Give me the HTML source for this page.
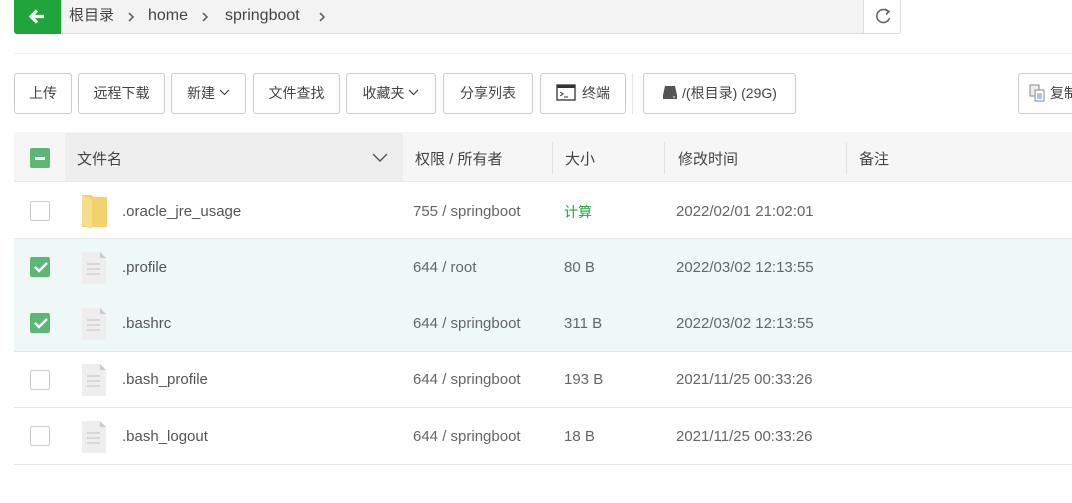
<!DOCTYPE html>
<html><head><meta charset="utf-8"><style>
*{box-sizing:border-box;margin:0;padding:0}
body{width:1072px;height:503px;background:#fff;font-family:"Liberation Sans","Noto Sans CJK SC",sans-serif;color:#555;font-size:14px;position:relative;overflow:hidden}
.abs{position:absolute}
.crumb{left:14px;top:0;width:887px;height:34px;background:#f3f3f3;border:1px solid #ddd;border-top:none;border-radius:0 0 3px 3px}
.back{left:14px;top:0;width:47px;height:34px;background:#20a53a;border-radius:0 0 0 3px}
.ref{left:863px;top:0;width:38px;height:34px;background:#fff;border:1px solid #ddd;border-top:none;border-radius:0 0 3px 0}
.ct{top:6px;font-size:16px;color:#444;line-height:20px}
.sep{left:14px;top:53px;width:1058px;height:1px;background:#eee}
.btn{position:absolute;top:73px;height:41px;border:1px solid #ccc;border-radius:3px;background:#fff;font-size:14px;color:#444;line-height:39px;text-align:center}
.hd{left:14px;top:132px;width:1058px;height:50px;background:#f6f6f6;border-bottom:1px solid #e8e8e8}
.hdn{left:65px;top:133px;width:338px;height:48px;background:#eee}
.ht{top:150px;font-size:15px;color:#444;line-height:20px}
.vl{top:142px;width:1px;height:32px;background:#e2e2e2}
.row{left:14px;width:1058px;height:57px;border-bottom:1px solid #e6e6e6}
.sel{background:#eff8f6;border-bottom:1px solid #d8ece8}
.cb{left:30px;width:20px;height:20px;border:1px solid #ccc;border-radius:2px;background:#fff}
.cbc{background:#5bb874;border-color:#5bb874}
.t{font-size:15px;color:#555;line-height:20px}
</style></head><body>
<div class="abs crumb"></div>
<div class="abs back"><svg width="47" height="34"><path d="M17 16.5h13M23 10.5l-6 6 6 6" stroke="#fff" stroke-width="3.2" fill="none"/></svg></div>
<div class="abs ct" style="left:69px;font-size:15px">根目录</div>
<svg class="abs" style="left:127px;top:11px" width="8" height="12"><path d="M2 2l4 4-4 4" stroke="#666" stroke-width="1.6" fill="none"/></svg>
<div class="abs ct" style="left:148px">home</div>
<svg class="abs" style="left:201px;top:11px" width="8" height="12"><path d="M2 2l4 4-4 4" stroke="#666" stroke-width="1.6" fill="none"/></svg>
<div class="abs ct" style="left:225px">springboot</div>
<svg class="abs" style="left:318px;top:11px" width="8" height="12"><path d="M2 2l4 4-4 4" stroke="#666" stroke-width="1.6" fill="none"/></svg>
<div class="abs ref"><svg width="38" height="34"><path d="M24 11.5A6.5 6.5 0 1 0 25.5 18" stroke="#666" stroke-width="1.6" fill="none"/><path d="M21 9l4 2.5-3 3" stroke="#666" stroke-width="1.6" fill="none"/></svg></div>
<div class="abs sep"></div>
<div class="btn" style="left:14px;width:58px">上传</div>
<div class="btn" style="left:78px;width:87px">远程下载</div>
<div class="btn" style="left:171px;width:75px">新建 <svg width="11" height="7" style="vertical-align:2px"><path d="M1 1l4.5 4.5L10 1" stroke="#444" stroke-width="1.2" fill="none"/></svg></div>
<div class="btn" style="left:253px;width:87px">文件查找</div>
<div class="btn" style="left:346px;width:90px">收藏夹 <svg width="11" height="7" style="vertical-align:2px"><path d="M1 1l4.5 4.5L10 1" stroke="#444" stroke-width="1.2" fill="none"/></svg></div>
<div class="btn" style="left:443px;width:90px">分享列表</div>
<div class="btn" style="left:540px;width:86px"><svg width="20" height="17" style="vertical-align:-3px;margin-right:6px"><rect x="1" y="1" width="18" height="15" fill="#fff" stroke="#333" stroke-width="1.3"/><rect x="1" y="1" width="18" height="3" fill="#333"/><path d="M4 8l3 2-3 2M8 13h4" stroke="#333" stroke-width="1" fill="none"/></svg>终端</div>
<div class="abs" style="left:632px;top:73px;width:1px;height:41px;background:#e5e5e5"></div>
<div class="btn" style="left:643px;width:153px"><svg width="16" height="16" style="vertical-align:-2px;margin-right:4px"><path d="M3 2h10l2 9H1z" fill="#555"/><rect x="1" y="11" width="14" height="4" fill="#555"/><rect x="11" y="12.5" width="2" height="1" fill="#fff"/></svg>/(根目录) (29G)</div>
<div class="btn" style="left:1018px;width:70px;text-align:left;padding-left:10px"><svg width="17" height="18" style="vertical-align:-4px;margin-right:4px"><rect x="1" y="1" width="9" height="11" fill="#eee" stroke="#888"/><rect x="6" y="6" width="9" height="11" fill="#fff" stroke="#888"/><path d="M8 10h5M8 12h5M8 14h5" stroke="#5a8fd6"/></svg>复制</div>
<div class="abs hd"></div>
<div class="abs hdn"></div>
<div class="abs cb cbc" style="top:148px"><div style="position:absolute;left:4px;top:8px;width:10px;height:2.5px;background:#fff"></div></div>
<div class="abs ht" style="left:77px">文件名</div>
<svg class="abs" style="left:372px;top:152px" width="16" height="12"><path d="M1 2l7 7 7-7" stroke="#555" stroke-width="1.4" fill="none"/></svg>
<div class="abs ht" style="left:415px">权限 / 所有者</div>
<div class="abs vl" style="left:552px"></div>
<div class="abs ht" style="left:565px">大小</div>
<div class="abs vl" style="left:664px"></div>
<div class="abs ht" style="left:678px">修改时间</div>
<div class="abs vl" style="left:846px"></div>
<div class="abs ht" style="left:859px">备注</div>

<div class="abs row" style="top:182px"></div>
<div class="abs row sel" style="top:239px"></div>
<div class="abs row sel" style="top:295px"></div>
<div class="abs row" style="top:351px"></div>
<div class="abs row" style="top:408px"></div>

<div class="abs cb" style="top:201px"></div>
<div class="abs cb cbc" style="top:257px"></div>
<div class="abs cb cbc" style="top:313px"></div>
<div class="abs cb" style="top:370px"></div>
<div class="abs cb" style="top:426px"></div>
<svg class="abs" style="left:33px;top:260px" width="16" height="14"><path d="M2 7l4 4 8-8" stroke="#fff" stroke-width="2.4" fill="none"/></svg>
<svg class="abs" style="left:33px;top:316px" width="16" height="14"><path d="M2 7l4 4 8-8" stroke="#fff" stroke-width="2.4" fill="none"/></svg>

<svg class="abs" style="left:81px;top:192px" width="27" height="38"><path d="M1 3h9l3 2h13v30H1z" fill="#f3d16e"/><path d="M1 3l10 4v30l-10-4z" fill="#f7dd8a"/></svg>
<svg class="abs" style="left:82px;top:252px" width="24" height="32"><path d="M0 0h18l6 6v26H0z" fill="#eee"/><path d="M18 0v6h6z" fill="#ccc"/><path d="M5 12h13M5 17h13M5 22h13" stroke="#ccc" stroke-width="1.3"/></svg>
<svg class="abs" style="left:82px;top:308px" width="24" height="32"><path d="M0 0h18l6 6v26H0z" fill="#eee"/><path d="M18 0v6h6z" fill="#ccc"/><path d="M5 12h13M5 17h13M5 22h13" stroke="#ccc" stroke-width="1.3"/></svg>
<svg class="abs" style="left:82px;top:364px" width="24" height="32"><path d="M0 0h18l6 6v26H0z" fill="#eee"/><path d="M18 0v6h6z" fill="#ccc"/><path d="M5 12h13M5 17h13M5 22h13" stroke="#ccc" stroke-width="1.3"/></svg>
<svg class="abs" style="left:82px;top:421px" width="24" height="32"><path d="M0 0h18l6 6v26H0z" fill="#eee"/><path d="M18 0v6h6z" fill="#ccc"/><path d="M5 12h13M5 17h13M5 22h13" stroke="#ccc" stroke-width="1.3"/></svg>

<div class="abs t" style="left:122px;top:202px">.oracle_jre_usage</div>
<div class="abs t" style="left:413px;top:202px;color:#666">755 / springboot</div>
<div class="abs t" style="left:564px;top:202px;color:#20a53a;font-size:14px">计算</div>
<div class="abs t" style="left:676px;top:202px;color:#666">2022/02/01 21:02:01</div>

<div class="abs t" style="left:122px;top:258px">.profile</div>
<div class="abs t" style="left:413px;top:258px;color:#666">644 / root</div>
<div class="abs t" style="left:564px;top:258px;color:#666">80 B</div>
<div class="abs t" style="left:676px;top:258px;color:#666">2022/03/02 12:13:55</div>

<div class="abs t" style="left:122px;top:314px">.bashrc</div>
<div class="abs t" style="left:413px;top:314px;color:#666">644 / springboot</div>
<div class="abs t" style="left:564px;top:314px;color:#666">311 B</div>
<div class="abs t" style="left:676px;top:314px;color:#666">2022/03/02 12:13:55</div>

<div class="abs t" style="left:122px;top:370px">.bash_profile</div>
<div class="abs t" style="left:413px;top:370px;color:#666">644 / springboot</div>
<div class="abs t" style="left:564px;top:370px;color:#666">193 B</div>
<div class="abs t" style="left:676px;top:370px;color:#666">2021/11/25 00:33:26</div>

<div class="abs t" style="left:122px;top:427px">.bash_logout</div>
<div class="abs t" style="left:413px;top:427px;color:#666">644 / springboot</div>
<div class="abs t" style="left:564px;top:427px;color:#666">18 B</div>
<div class="abs t" style="left:676px;top:427px;color:#666">2021/11/25 00:33:26</div>
</body></html>
